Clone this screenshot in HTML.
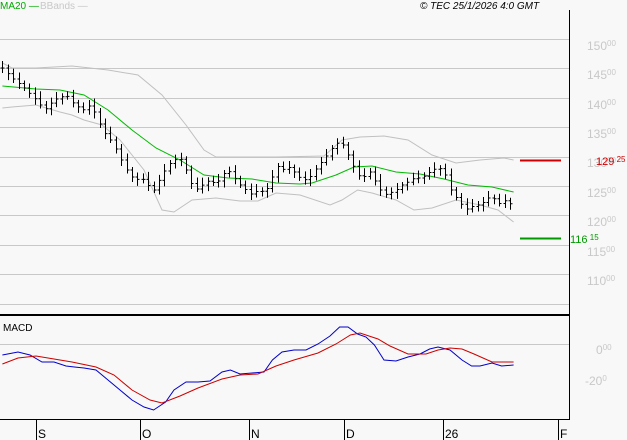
<!DOCTYPE html>
<html><head><meta charset="utf-8"><style>
html,body{margin:0;padding:0;background:#f8f8f8;}
svg{display:block;font-family:"Liberation Sans",sans-serif;}
</style></head><body>
<svg id="s" width="627" height="440" viewBox="0 0 627 440" xmlns="http://www.w3.org/2000/svg">
<rect width="627" height="440" fill="#f8f8f8"/>
<g stroke="#c8c8c8" stroke-width="1">
<line x1="0" x2="569" y1="39.5" y2="39.5"/><line x1="0" x2="569" y1="68.5" y2="68.5"/>
<line x1="0" x2="569" y1="98.5" y2="98.5"/><line x1="0" x2="569" y1="127.5" y2="127.5"/>
<line x1="0" x2="569" y1="157.5" y2="157.5"/><line x1="0" x2="569" y1="186.5" y2="186.5"/>
<line x1="0" x2="569" y1="215.5" y2="215.5"/><line x1="0" x2="569" y1="245.5" y2="245.5"/>
<line x1="0" x2="569" y1="274.5" y2="274.5"/><line x1="0" x2="569" y1="304.5" y2="304.5"/>
<line x1="0" x2="569" y1="344.5" y2="344.5"/>
</g>
<line x1="569.5" y1="10" x2="569.5" y2="420" stroke="#000"/>
<line x1="0" y1="315" x2="569" y2="315" stroke="#000" stroke-width="2"/>
<line x1="0" y1="419.5" x2="569" y2="419.5" stroke="#000"/>
<g stroke="#000"><line x1="36.5" y1="419" x2="36.5" y2="440"/><line x1="140.5" y1="419" x2="140.5" y2="440"/><line x1="249.5" y1="419" x2="249.5" y2="440"/><line x1="344.5" y1="419" x2="344.5" y2="440"/><line x1="443.5" y1="419" x2="443.5" y2="440"/><line x1="558.5" y1="419" x2="558.5" y2="440"/></g>
<g font-size="12" fill="#000"><text x="38" y="438">S</text><text x="142" y="438">O</text><text x="251" y="438">N</text><text x="346" y="438">D</text><text x="445" y="438">26</text><text x="560" y="438">F</text></g>
<g fill="#c8c8c8" font-size="12">
<text x="587" y="50">150<tspan font-size="8" dy="-4">00</tspan></text>
<text x="587" y="79">145<tspan font-size="8" dy="-4">00</tspan></text>
<text x="587" y="109">140<tspan font-size="8" dy="-4">00</tspan></text>
<text x="587" y="138">135<tspan font-size="8" dy="-4">00</tspan></text>
<text x="587" y="167">130<tspan font-size="8" dy="-4">00</tspan></text>
<text x="587" y="197">125<tspan font-size="8" dy="-4">00</tspan></text>
<text x="587" y="226">120<tspan font-size="8" dy="-4">00</tspan></text>
<text x="587" y="256">115<tspan font-size="8" dy="-4">00</tspan></text>
<text x="587" y="285">110<tspan font-size="8" dy="-4">00</tspan></text>
<text x="596" y="354">0<tspan font-size="8" dy="-4">00</tspan></text>
<text x="585" y="385">-20<tspan font-size="8" dy="-4">0</tspan></text>
</g>
<line x1="520" y1="160.5" x2="561" y2="160.5" stroke="#cc0000" stroke-width="2"/>
<text x="596" y="165" fill="#cc0000" font-size="11">129<tspan font-size="8" dy="-3"> 25</tspan></text>
<line x1="520" y1="238.5" x2="561" y2="238.5" stroke="#009900" stroke-width="2"/>
<text x="570" y="243" fill="#009900" font-size="11">116<tspan font-size="8" dy="-3"> 15</tspan></text>
<text x="0" y="9" font-size="10" fill="#00aa00">MA20 —</text>
<text x="40" y="9" font-size="10" fill="#c8c8c8">BBands —</text>
<text x="420" y="9" font-size="10" font-style="italic" fill="#000">© TEC 25/1/2026 4:0 GMT</text>
<text x="3" y="331" font-size="10" fill="#000">MACD</text>
<g transform="scale(1.2,1)">
<polyline fill="none" stroke="#c0c0c0" vector-effect="non-scaling-stroke" points="2,63 10,68 30,68 60,66 75,68 90,70 115,75 135,95 155,125 170,150 180,157 200,157 230,157 270,156 285,140 300,137 320,136 340,140 360,155 380,163 400,160 420,158 428,160"/>
<polyline fill="none" stroke="#c0c0c0" vector-effect="non-scaling-stroke" points="2,108 10,107 30,105 50,112 60,115 70,120 85,125 100,140 120,170 135,210 145,212 160,200 180,198 200,201 215,201 230,193 250,195 275,205 285,200 298,190 310,193 330,200 345,210 360,208 380,200 400,205 415,210 428,222"/>
<polyline fill="none" stroke="#00bb00" vector-effect="non-scaling-stroke" points="2,86 30,89 50,90 70,95 90,110 110,130 130,148 150,160 170,175 190,178 210,179 230,183 250,184 260,183 280,175 295,167 310,166 330,172 350,174 370,179 390,185 410,187 428,192"/>
<polyline fill="none" stroke="#0000cc" vector-effect="non-scaling-stroke" points="2,355 15,352 25,355 35,362 45,362 55,366 62,367 70,368 80,370 90,380 100,390 110,400 120,407 128,410 138,402 145,390 155,382 165,382 175,381 185,372 192,370 200,374 210,373 220,372 227,360 235,352 245,350 255,350 265,344 275,336 283,327 290,327 298,334 305,337 312,345 320,360 330,361 340,357 350,354 358,349 365,347 375,350 385,360 393,366 400,366 410,363 418,366 428,365"/>
<polyline fill="none" stroke="#cc0000" vector-effect="non-scaling-stroke" points="2,364 15,358 30,356 45,359 60,362 80,367 95,375 110,390 125,400 135,403 150,396 165,388 185,379 200,375 215,374 230,366 245,360 265,353 280,344 292,335 300,333 315,339 325,346 340,354 355,354 365,350 375,348 385,349 395,354 410,362 428,362"/>
</g>
<g id="bars" stroke="#000" stroke-width="1"></g>
</svg>
<script>
var c=[[2,68],[10,78],[20,88],[30,100],[37,110],[45,100],[55,95],[62,105],[70,110],[75,105],[80,115],[85,130],[92,140],[97,150],[103,165],[108,175],[113,180],[118,178],[123,185],[128,190],[135,175],[140,165],[145,160],[150,158],[155,170],[160,185],[165,190],[170,183],[175,180],[180,185],[185,175],[190,170],[195,178],[200,185],[205,190],[210,195],[215,190],[220,192],[225,185],[230,165],[235,170],[240,167],[245,172],[250,178],[255,180],[260,175],[265,165],[270,160],[275,150],[280,145],[283,140],[288,150],[292,160],[298,175],[302,178],[308,172],[312,180],[317,190],[320,195],[325,193],[330,190],[335,185],[340,182],[345,178],[350,178],[355,175],[360,170],[365,168],[370,170],[373,185],[378,195],[382,200],[385,205],[390,210],[395,205],[400,205],[405,200],[410,195],[414,205],[418,202],[422,200],[426,205],[428,208]];
function yAt(x){for(var i=1;i<c.length;i++){if(x<=c[i][0]){var a=c[i-1],b=c[i];return a[1]+(b[1]-a[1])*(x-a[0])/(b[0]-a[0]);}}return c[c.length-1][1];}
var d="",p=yAt(2);
for(var x=2;x<=428;x+=4.5){var y=yAt(x),o=p,h=Math.min(o,y)-3-((x*7)%5),l=Math.max(o,y)+3+((x*3)%4);var X=Math.round(x*1.2)+0.5;d+="M"+X+" "+h.toFixed(1)+"V"+l.toFixed(1)+"M"+(X-2)+" "+o.toFixed(1)+"H"+X+"M"+X+" "+y.toFixed(1)+"H"+(X+2);p=y;}
var g=document.getElementById("bars");var pa=document.createElementNS("http://www.w3.org/2000/svg","path");pa.setAttribute("d",d);pa.setAttribute("fill","none");g.appendChild(pa);
</script>
</body></html>
